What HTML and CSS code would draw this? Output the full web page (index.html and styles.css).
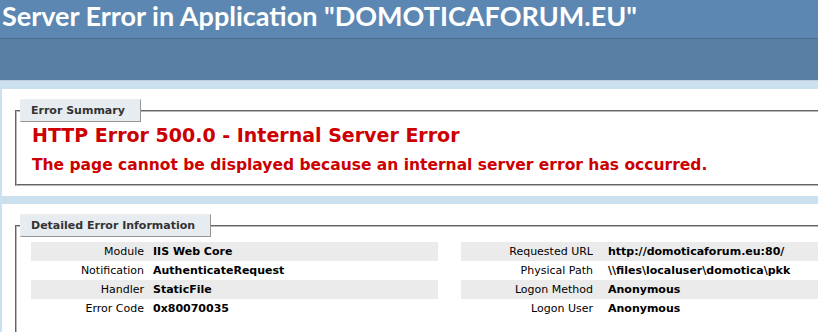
FILE: index.html
```html
<!DOCTYPE html>
<html lang="en">
<head>
    <meta charset="UTF-8">
    <title>IIS 7.0 Detailed Error - 500.0 - Internal Server Error</title>
    <link rel="stylesheet" href="styles.css">
</head>
<body>
    <div class="page">
        <div id="header">
            <h1>Server Error in Application "DOMOTICAFORUM.EU"</h1>
        </div>
        <div id="server-version"></div>

        <div class="content-container">
            <fieldset class="summary">
                <legend>Error Summary</legend>
                <h2>HTTP Error 500.0 - Internal Server Error</h2>
                <h3>The page cannot be displayed because an internal server error has occurred.</h3>
            </fieldset>
        </div>

        <div class="content-container">
            <fieldset class="details">
                <legend>Detailed Error Information</legend>
                <div class="details-row">
                    <table class="details-left">
                        <tr class="alt"><th>Module</th><td>IIS Web Core</td></tr>
                        <tr><th>Notification</th><td>AuthenticateRequest</td></tr>
                        <tr class="alt"><th>Handler</th><td>StaticFile</td></tr>
                        <tr><th>Error Code</th><td>0x80070035</td></tr>
                    </table>
                    <table class="details-right">
                        <tr class="alt"><th>Requested URL</th><td>http://domoticaforum.eu:80/</td></tr>
                        <tr><th>Physical Path</th><td>\\files\localuser\domotica\pkk</td></tr>
                        <tr class="alt"><th>Logon Method</th><td>Anonymous</td></tr>
                        <tr><th>Logon User</th><td>Anonymous</td></tr>
                    </table>
                </div>
            </fieldset>
        </div>
    </div>
</body>
</html>
```

FILE: styles.css
```css
body {
    margin: 0;
    font-size: 11px;
    font-family: "DejaVu Sans", Verdana, sans-serif;
    background: #cbe1ef;
    overflow: hidden;
}
.page {
    width: 1100px;
}
#header {
    height: 38px;
    padding: 0 2px;
    background: #5c87b2;
    font-family: Lato, "DejaVu Sans Condensed", sans-serif;
    color: #fff;
}
#header h1 {
    margin: 0;
    font-size: 27px;
    line-height: 31px;
    font-weight: bold;
}
#server-version {
    height: 41px;
    background: #5a7fa5;
    border-top: 1px solid #4a6c8e;
    border-bottom: 1px solid #c1cfdd;
}
.content-container {
    background: #fff;
    margin: 8px 0 0 2px;
    padding: 10px 10px 10px 13px;
}
fieldset {
    margin: 0;
    padding: 0 15px 10px 15px;
    border: 2px groove #b8b8b8;
    min-width: 0;
}
legend {
    color: #333;
    padding: 4px 15px 4px 10px;
    margin: 0 0 0 -12px;
    border-top: 1px solid #ededed;
    border-left: 1px solid #ededed;
    border-right: 1px solid #969696;
    border-bottom: 1px solid #969696;
    background: #e7ecf0;
    font-weight: bold;
    font-size: 11px;
    line-height: 13px;
}
h2 {
    font-size: 19px;
    margin: 1px 0 0 0;
    color: #cc0000;
    line-height: 24px;
}
h3 {
    font-size: 15.5px;
    margin: 9px 0 0 0;
    color: #cc0000;
    line-height: 18px;
}
.details {
    padding-bottom: 40px;
}
.details-row {
    display: flex;
    gap: 23px;
    margin: 5px 0 0 -1px;
}
table {
    border-collapse: collapse;
}
th {
    text-align: right;
    font-weight: normal;
    padding: 0 4px 0 0;
    line-height: 19px;
    white-space: nowrap;
}
td {
    font-weight: bold;
    padding: 0 0 0 5px;
    line-height: 19px;
    white-space: nowrap;
}
.details-left {
    width: 407px;
}
.details-left th {
    width: 113px;
}
.details-right {
    width: 500px;
}
.details-right th {
    width: 132px;
    padding-right: 5px;
}
.details-right td {
    padding-left: 10px;
}
.alt {
    background: #ebebeb;
}
```
